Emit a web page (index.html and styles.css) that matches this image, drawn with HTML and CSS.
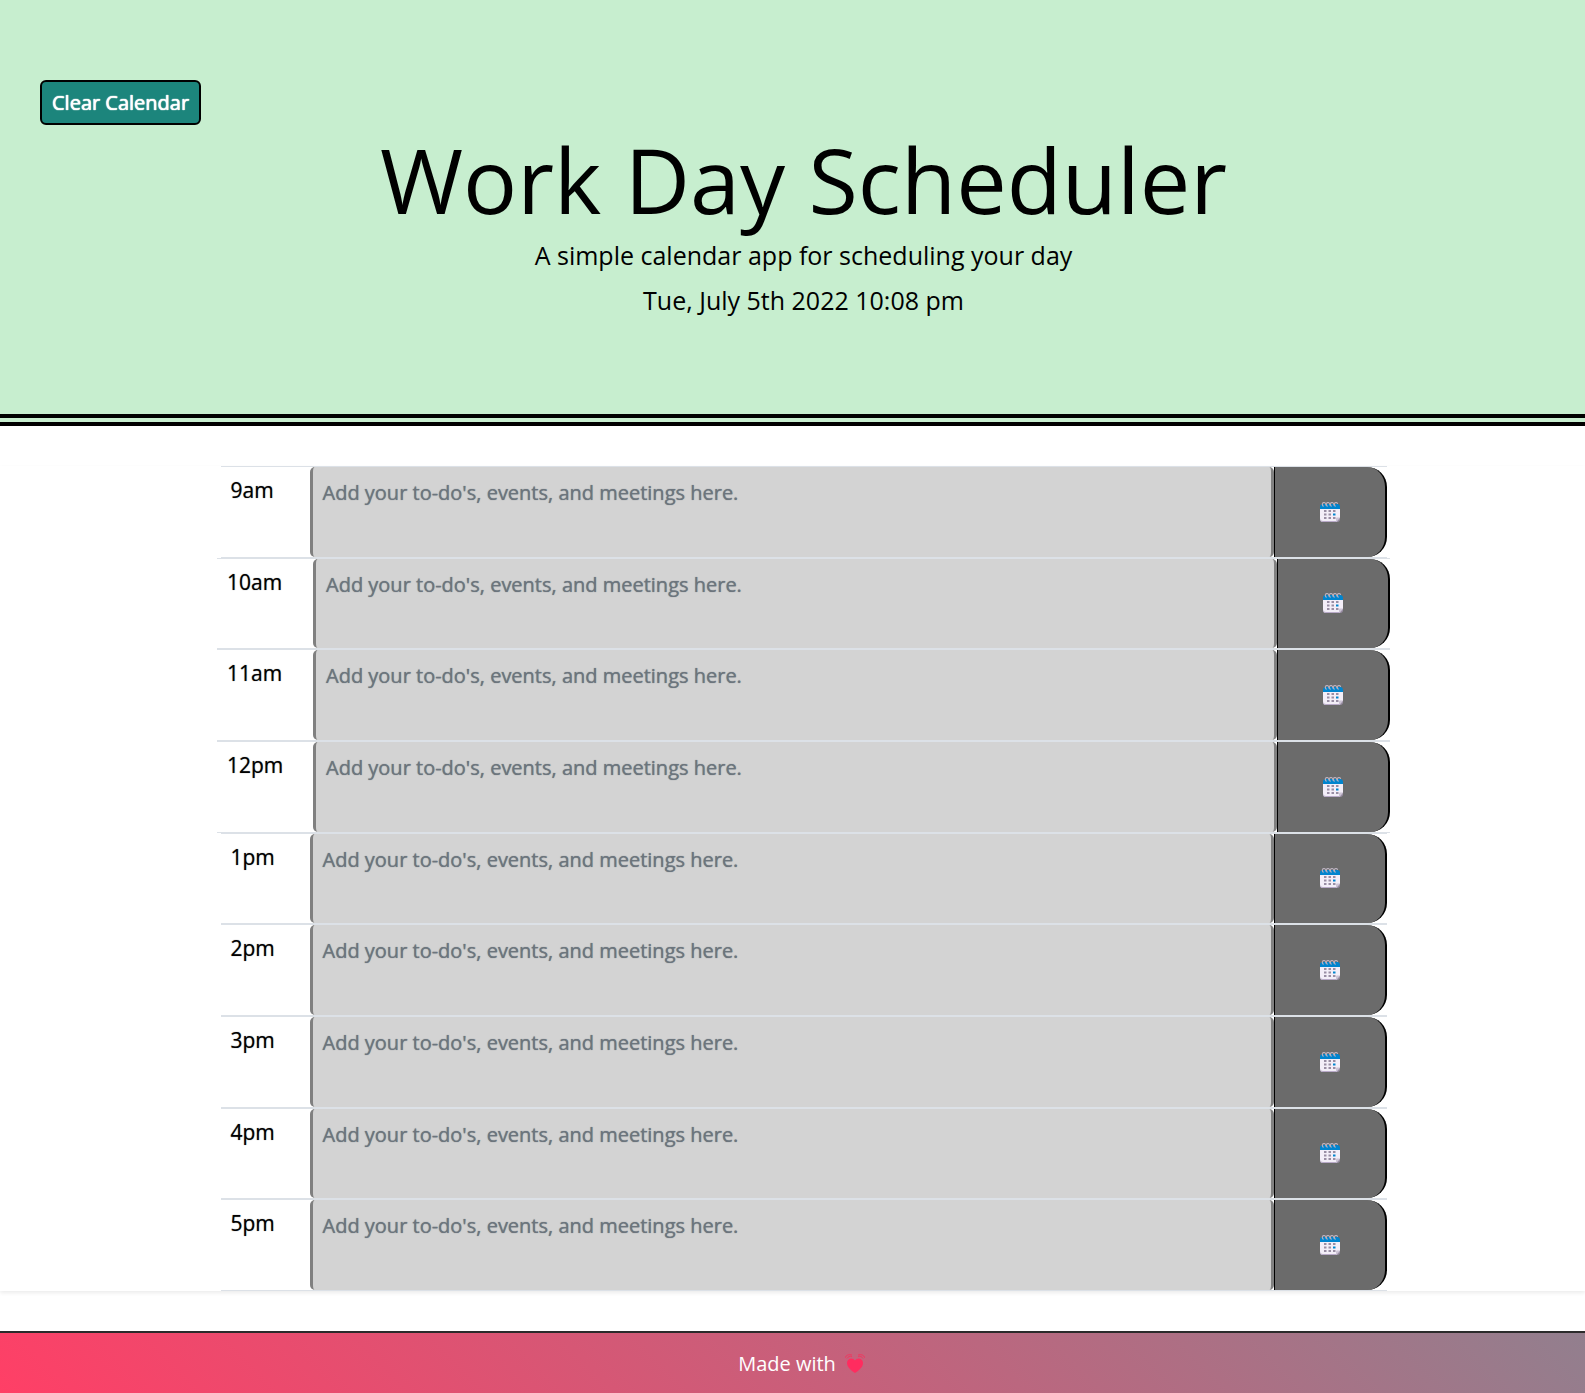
FILE: index.html
```html
<!DOCTYPE html>
<html lang="en">
<head>
<meta charset="utf-8">
<meta name="viewport" content="width=device-width, initial-scale=1">
<title>Work Day Scheduler</title>
<link rel="stylesheet" href="styles.css">
</head>
<body>
<svg class="sprite" aria-hidden="true">
  <symbol id="calendar" viewBox="0 0 20 20">
    <path d="M0 6h20v11l-3 3H3a3 3 0 0 1-3-3z" fill="#f3eef8"/>
    <path d="M0 16a3 3 0 0 0 3 3h14l-1 1H3a3 3 0 0 1-3-3z" fill="#b9aac8"/>
    <path d="M20 15.500v1.500a3 3 0 0 1-3 3h-1z" fill="#998ea4"/>
    <path d="M16 20v-3.500a1 1 0 0 1 1-1h3z" fill="#cdc4d6"/>
    <path d="M0 7V5a3 3 0 0 1 3-3h14a3 3 0 0 1 3 3v2z" fill="#0084ce"/>
    <path d="M3.500 4.500C1.500 3 2.500.5 4 .5S6 2.500 6 3.500M7.500 4.500C5.500 3 6.500.5 8 .5S10 2.500 10 3.500M11.500 4.500C9.500 3 10.500.5 12 .5S14 2.500 14 3.500M15.500 4.500C13.500 3 14.500.5 16 .5S17.500 1.500 17.500 2" fill="none" stroke="#b9b0bd" stroke-width="1.200"/>
    <path d="M4 8h2.500v2H4zM8.500 8h2.500v2H8.500zM13 8h2.500v2H13zM4 11.500h2.500v2H4zM8.500 11.500h2.500v2H8.500zM4 15h2.500v2H4zM8.500 15h2.500v2H8.500zM13 15h2.500v2H13z" fill="#998ea4"/>
    <path d="M13 11.500h2.500v2H13z" fill="#0084ce"/>
  </symbol>
</svg>
<header class="header">
  <button class="clear" type="button">Clear Calendar</button>
  <h1 class="title">Work Day Scheduler</h1>
  <p class="lead">A simple calendar app for scheduling your day</p>
  <p class="lead">Tue, July 5th 2022 10:08 pm</p>
</header>
<main class="schedule">
  <div class="row"><label class="hour" for="h9">9am</label><textarea class="task" id="h9" placeholder="Add your to-do's, events, and meetings here."></textarea><button class="save" type="button" aria-label="Save 9am"><svg class="icon"><use href="#calendar"/></svg></button></div>
  <div class="row"><label class="hour hour-wide" for="h10">10am</label><textarea class="task" id="h10" placeholder="Add your to-do's, events, and meetings here."></textarea><button class="save" type="button" aria-label="Save 10am"><svg class="icon"><use href="#calendar"/></svg></button></div>
  <div class="row"><label class="hour hour-wide" for="h11">11am</label><textarea class="task" id="h11" placeholder="Add your to-do's, events, and meetings here."></textarea><button class="save" type="button" aria-label="Save 11am"><svg class="icon"><use href="#calendar"/></svg></button></div>
  <div class="row"><label class="hour hour-wide" for="h12">12pm</label><textarea class="task" id="h12" placeholder="Add your to-do's, events, and meetings here."></textarea><button class="save" type="button" aria-label="Save 12pm"><svg class="icon"><use href="#calendar"/></svg></button></div>
  <div class="row"><label class="hour" for="h13">1pm</label><textarea class="task" id="h13" placeholder="Add your to-do's, events, and meetings here."></textarea><button class="save" type="button" aria-label="Save 1pm"><svg class="icon"><use href="#calendar"/></svg></button></div>
  <div class="row"><label class="hour" for="h14">2pm</label><textarea class="task" id="h14" placeholder="Add your to-do's, events, and meetings here."></textarea><button class="save" type="button" aria-label="Save 2pm"><svg class="icon"><use href="#calendar"/></svg></button></div>
  <div class="row"><label class="hour" for="h15">3pm</label><textarea class="task" id="h15" placeholder="Add your to-do's, events, and meetings here."></textarea><button class="save" type="button" aria-label="Save 3pm"><svg class="icon"><use href="#calendar"/></svg></button></div>
  <div class="row"><label class="hour" for="h16">4pm</label><textarea class="task" id="h16" placeholder="Add your to-do's, events, and meetings here."></textarea><button class="save" type="button" aria-label="Save 4pm"><svg class="icon"><use href="#calendar"/></svg></button></div>
  <div class="row"><label class="hour" for="h17">5pm</label><textarea class="task" id="h17" placeholder="Add your to-do's, events, and meetings here."></textarea><button class="save" type="button" aria-label="Save 5pm"><svg class="icon"><use href="#calendar"/></svg></button></div>
</main>
<footer class="footer">
  <span>Made with</span>
  <svg class="heart" viewBox="0 0 20 20" role="img" aria-label="love">
    <path d="M10 19C6 16.500 2 13 2 9c0-5 6-6 8-2.500C12 3 18 4 18 9c0 4-4 7.500-8 10z" fill="#ff2c5f"/>
    <path d="M0 4C1 1 4 0 7 1M2 4.500C3 2.500 5 2 7 2.500M20 4C19 1 16 0 13 1M18 4.500C17 2.500 15 2 13 2.500" fill="none" stroke="#f03860"/>
  </svg>
</footer>
</body>
</html>
```
FILE: styles.css
```css
* { box-sizing: border-box; }

body {
  margin: 0;
  background: #fff;
  color: #000;
  font-family: "Open Sans", sans-serif;
  font-size: 21px;
  line-height: 32px;
}

.sprite { position: absolute; width: 0; height: 0; }

.header {
  display: flex;
  flex-direction: column;
  align-items: center;
  padding: 80px 0 88px 22px;
  border-bottom: 12px double #000;
  background: #c7eecf;
}

.clear {
  align-self: flex-start;
  margin-left: 18px;
  padding: 5px 10px;
  border: 2px solid #000;
  border-radius: 6px;
  background: #1c857c;
  color: #fff;
  font: 500 20px/31px "Open Sans", sans-serif;
  text-shadow: 0 0 1px #fff, 0 0 1px #fff;
}

.title {
  margin: 0 0 3px;
  font-size: 90px;
  font-weight: 400;
  line-height: 108px;
}

.lead {
  margin: 0 0 7px;
  font-size: 25px;
  font-weight: 400;
  line-height: 38px;
}

.schedule {
  display: grid;
  grid-auto-rows: 1fr;
  min-height: 825px;
  margin: 40px 0;
  padding-left: 22px;
  box-shadow: 0 2px 4px rgba(0, 0, 0, 0.08);
}

.row {
  display: flex;
  justify-self: center;
  max-width: 100%;
  border: solid #dce1e7;
  border-width: 1px 0;
}

.hour {
  flex: none;
  width: 89px;
  padding: 7px 10px;
  font-weight: 500;
  text-shadow: 0 0 1px rgba(0, 0, 0, 0.6);
}

.hour-wide { width: 96px; }

.task {
  flex: 0 1 964px;
  width: 964px;
  min-width: 0;
  height: 100%;
  min-height: 88px;
  padding: 10px;
  border: solid #808080;
  border-width: 0 3px;
  border-radius: 5px;
  background: #d3d3d3;
  font: 500 20px/32px "Open Sans", sans-serif;
  resize: none;
}

.task::placeholder {
  color: #6c757d;
  opacity: 1;
  text-shadow: 0 0 1px #6c757d;
}

.save {
  display: flex;
  flex: none;
  align-items: center;
  justify-content: center;
  width: 113px;
  padding: 0;
  border: solid #000;
  border-width: 0 2px 0 1px;
  border-radius: 0 20px 20px 0;
  background: #6b6b6b;
}

.icon { width: 20px; height: 20px; }

.footer {
  display: flex;
  align-items: center;
  justify-content: center;
  gap: 9px;
  padding: 15px 0 13px 18px;
  border-top: 2px solid #2b2b2b;
  background: linear-gradient(45deg, #ff3f66, #927f8e);
  color: #fff;
  font-size: 20px;
}

.heart { width: 20px; height: 20px; }
```
